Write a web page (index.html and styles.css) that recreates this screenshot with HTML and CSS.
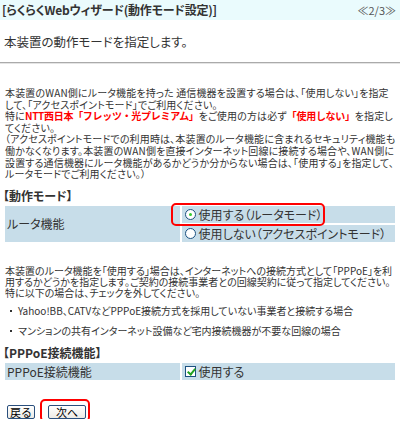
FILE: index.html
```html
<!DOCTYPE html>
<html lang="ja">
<head>
    <meta charset="UTF-8">
    <title>らくらくWebウィザード</title>
    <link rel="stylesheet" href="styles.css">
</head>
<body>
    <div class="titlebar">
        <span class="title">[らくらくWebウィザード(動作モード設定)]</span>
        <span class="step">≪2/3≫</span>
    </div>
    <div class="wizard">
        <p class="lead">本装置の動作モードを指定します。</p>
        <hr class="rule">
        <p class="note">本装置のWAN側にルータ機能を持った 通信機器を設置する場合は、「使用しない」を指定して、「アクセスポイントモード」でご利用ください。<br>特に<em>NTT西日本「フレッツ・光プレミアム」</em>をご使用の方は必ず<em>「使用しない」</em>を指定してください。<br>（アクセスポイントモードでの利用時は、本装置のルータ機能に含まれるセキュリティ機能も働かなくなります。本装置のWAN側を直接インターネット回線に接続する場合や、WAN側に設置する通信機器にルータ機能があるかどうか分からない場合は、「使用する」を指定して、ルータモードでご利用ください。）</p>

        <h3 class="section">【動作モード】</h3>
        <table class="setting">
            <tr>
                <th rowspan="2">ルータ機能</th>
                <td><label class="option marked"><input type="radio" name="mode" checked>使用する（ルータモード）</label></td>
            </tr>
            <tr>
                <td><label class="option"><input type="radio" name="mode">使用しない（アクセスポイントモード）</label></td>
            </tr>
        </table>

        <p class="note note-pppoe">本装置のルータ機能を「使用する」場合は、インターネットへの接続方式として「PPPoE」を利用するかどうかを指定します。ご契約の接続事業者との回線契約に従って指定してください。特に以下の場合は、チェックを外してください。</p>
        <ul class="cases">
            <li>Yahoo!BB、CATVなどPPPoE接続方式を採用していない事業者と接続する場合</li>
            <li>マンションの共有インターネット設備など宅内接続機器が不要な回線の場合</li>
        </ul>

        <h3 class="section">【PPPoE接続機能】</h3>
        <table class="setting">
            <tr>
                <th>PPPoE接続機能</th>
                <td><label class="option"><input type="checkbox" checked>使用する</label></td>
            </tr>
        </table>

        <div class="buttons">
            <button class="btn">戻る</button>
            <span class="marked-btn"><button class="btn btn-next">次へ</button></span>
        </div>
    </div>
</body>
</html>
```

FILE: styles.css
```css
body {
    margin: 0;
    font-family: "Noto Sans CJK JP", "Noto Sans", sans-serif;
    font-feature-settings: "palt";
    color: #333;
    background: #fff;
}
.titlebar {
    display: flex;
    justify-content: space-between;
    height: 20px;
    line-height: 20px;
    padding: 0 4px 0 2px;
    background: #eafbfd;
    font-size: 12px;
}
.title {
    font-weight: bold;
    letter-spacing: -0.2px;
}
.step {
    color: #555;
    font-size: 11px;
}
.wizard {
    padding: 0 3px;
}
.lead {
    margin: 14px 0 0 1px;
    font-size: 12.5px;
    line-height: 16px;
}
.rule {
    margin: 12px -3px 0;
    border: 0;
    border-top: 1px solid #aaa;
    border-bottom: 1px solid #e4e4e4;
}
.note {
    margin: 23px 0 0 2px;
    font-size: 10px;
    line-height: 11.6px;
    letter-spacing: 0.15px;
}
.note em {
    font-style: normal;
    font-weight: bold;
    font-feature-settings: normal;
    letter-spacing: -0.3px;
    color: #f00;
}
.section {
    margin: 9px 0 3px;
    font-size: 12px;
    line-height: 14px;
}
.setting {
    width: 100%;
    border-spacing: 2px;
    margin: -2px 0 0;
}
.setting th,
.setting td {
    background: #c7dde9;
    font-size: 12px;
    font-weight: normal;
    text-align: left;
    height: 17px;
    padding: 0 2px;
    white-space: nowrap;
}
.setting th {
    width: 45%;
}
.option {
    display: inline-flex;
    align-items: center;
    gap: 2px;
    position: relative;
}
.option input {
    appearance: none;
    margin: 0 1px;
    width: 11px;
    height: 11px;
    border: 1px solid #1c5180;
    background: #fff;
    position: relative;
}
.option input[type="radio"] {
    border-radius: 50%;
}
.option input[type="radio"]:checked::after {
    content: "";
    position: absolute;
    left: 3px;
    top: 3px;
    width: 3px;
    height: 3px;
    border-radius: 50%;
    background: #3c3;
}
.option input[type="checkbox"]:checked::after {
    content: "";
    position: absolute;
    left: 3px;
    top: 0;
    width: 3px;
    height: 6px;
    border: solid #21a121;
    border-width: 0 2px 2px 0;
    transform: rotate(40deg);
}
.marked::after {
    content: "";
    position: absolute;
    left: -13px;
    top: -3px;
    right: -3px;
    bottom: -3px;
    border: 2px solid #f00;
    border-radius: 5px;
}
.note-pppoe {
    margin-top: 21px;
    line-height: 11px;
    letter-spacing: 0;
}
.cases {
    list-style: none;
    margin: 7px 0 0;
    padding: 0 0 0 15px;
    font-size: 10px;
    line-height: 12px;
}
.cases li {
    position: relative;
    margin-bottom: 8px;
}
.cases li::before {
    content: "";
    position: absolute;
    left: -8px;
    top: 5px;
    width: 2px;
    height: 2px;
    background: #333;
}
.buttons {
    display: flex;
    align-items: center;
    margin: 23px 0 0 4px;
}
.btn {
    height: 14px;
    padding: 0 2px;
    font-family: inherit;
    font-size: 11px;
    line-height: 12px;
    color: #000;
    background: linear-gradient(#fff, #ecebe6);
    border: 1px solid #2a4f7d;
    border-radius: 2px;
}
.btn-next {
    padding: 0 7px;
}
.marked-btn {
    display: inline-flex;
    position: relative;
    margin-left: 13px;
}
.marked-btn::after {
    content: "";
    position: absolute;
    left: -8px;
    top: -6px;
    right: -4px;
    bottom: -3px;
    border: 2px solid #f00;
    border-radius: 5px;
}
```
